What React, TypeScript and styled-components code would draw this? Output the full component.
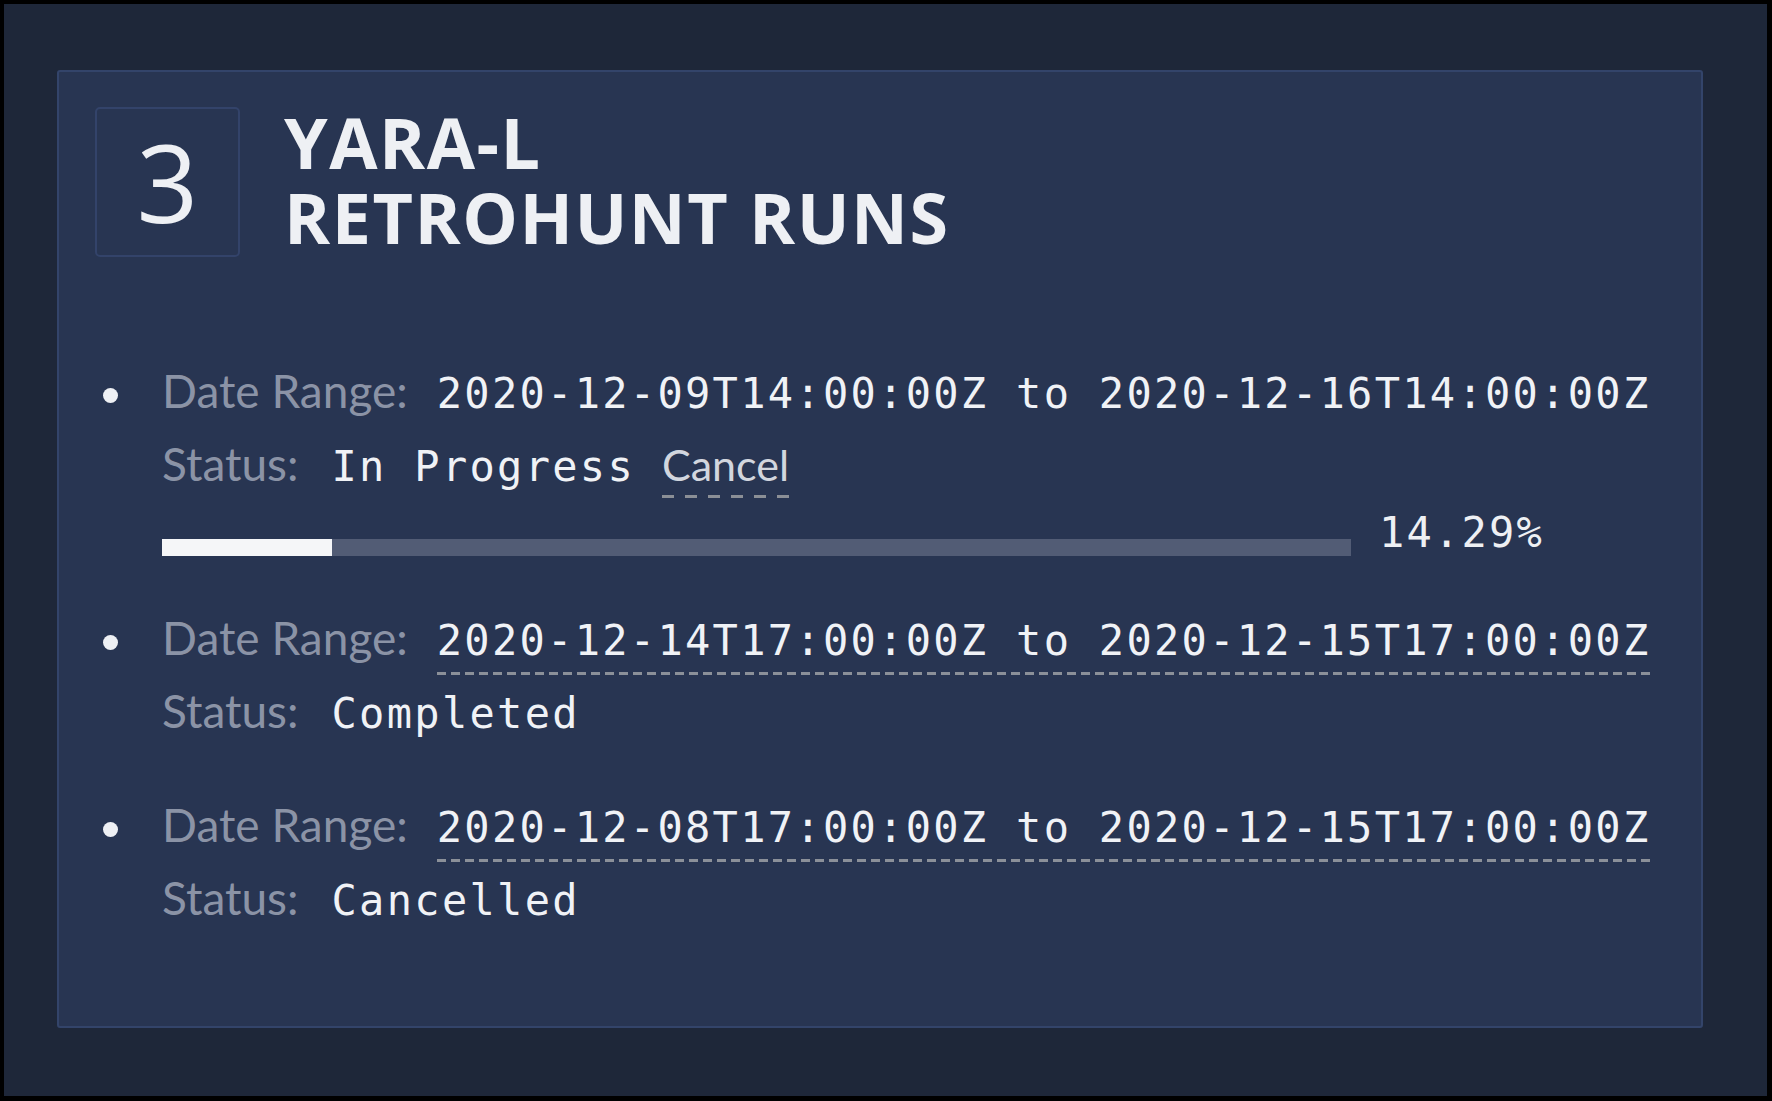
import React from "react";
import styled, { createGlobalStyle } from "styled-components";

const GlobalStyle = createGlobalStyle`
  html, body {
    margin: 0;
    padding: 0;
    background: #000;
  }
  * { box-sizing: border-box; }
`;

const Page = styled.div`
  margin: 4px 5px 5px 4px;
  height: 1092px;
  background: #1e2739;
  padding: 66px 64px 68px 53px;
  display: flex;
  flex-direction: column;
`;

const Card = styled.section`
  flex: 1;
  background: #283552;
  border: 2px solid #33446a;
  border-radius: 3px;
  padding: 35px 36px;
`;

const Header = styled.header`
  display: flex;
  align-items: flex-start;
  gap: 44px;
`;

const NumberBox = styled.div`
  width: 145px;
  height: 150px;
  border: 2px solid #33436a;
  border-radius: 5px;
  display: flex;
  align-items: center;
  justify-content: center;
  font-family: "Open Sans", sans-serif;
  font-weight: 400;
  font-size: 108px;
  line-height: 1;
  color: #eef0f4;
`;

const Title = styled.h1`
  margin: -2px 0 0;
  font-family: "Open Sans", sans-serif;
  font-weight: 700;
  font-size: 70px;
  line-height: 75px;
  letter-spacing: 1.5px;
  text-transform: uppercase;
  color: #eef0f4;
`;

const RunList = styled.ul`
  list-style: none;
  margin: 97px 0 0;
  padding: 0;
  display: flex;
  flex-direction: column;
  gap: 41px;
`;

const RunItem = styled.li`
  display: grid;
  grid-template-columns: 67px 1fr;
`;

const Bullet = styled.span`
  width: 15px;
  height: 15px;
  border-radius: 50%;
  background: #eef0f4;
  margin: 34px 0 0 8px;
`;

const RunBody = styled.div`
  display: flex;
  flex-direction: column;
`;

const FieldLine = styled.div`
  display: flex;
  align-items: baseline;
  height: 73px;
  line-height: 73px;
  white-space: nowrap;
`;

const Label = styled.span<{ $gap?: number }>`
  font-family: Lato, "Open Sans", sans-serif;
  font-size: 46px;
  color: #8b93a6;
  margin-right: ${(p) => p.$gap ?? 29}px;
`;

const Value = styled.span<{ $dashed?: boolean }>`
  font-family: "DejaVu Sans Mono", "Liberation Mono", monospace;
  font-size: 42px;
  letter-spacing: 2.3px;
  color: #f0f2f6;
  white-space: pre;
  ${(p) =>
    p.$dashed
      ? `
    background-image: linear-gradient(to right, #8b9099 0 9px, transparent 9px 14px);
    background-size: 14px 3px;
    background-repeat: repeat-x;
    background-position: 0 calc(100% - 2px);
  `
      : ""}
`;

const CancelLink = styled.span`
  font-family: Lato, "Open Sans", sans-serif;
  font-size: 43px;
  color: #d2d6de;
  margin-left: 27px;
  cursor: pointer;
  background-image: linear-gradient(to right, #8b8f96 0 12px, transparent 12px 23px);
  background-size: 23px 3px;
  background-repeat: repeat-x;
  background-position: 0 calc(100% - 3px);
`;

const ProgressRow = styled.div`
  display: flex;
  align-items: flex-start;
  margin: 12px 0 4px;
`;

const Track = styled.div`
  width: 1189px;
  height: 17px;
  margin-top: 27px;
  background: #525c75;
`;

const Fill = styled.div`
  height: 100%;
  background: #f5f6f8;
`;

const Percent = styled.span`
  font-family: "DejaVu Sans Mono", "Liberation Mono", monospace;
  font-size: 42px;
  line-height: 1;
  letter-spacing: 2.2px;
  color: #eef0f4;
  margin-left: 28px;
`;

type Run = {
  range: string;
  status: string;
  dashed: boolean;
  progress?: number;
};

const runs: Run[] = [
  {
    range: "2020-12-09T14:00:00Z to 2020-12-16T14:00:00Z",
    status: "In Progress",
    dashed: false,
    progress: 14.29,
  },
  {
    range: "2020-12-14T17:00:00Z to 2020-12-15T17:00:00Z",
    status: "Completed",
    dashed: true,
  },
  {
    range: "2020-12-08T17:00:00Z to 2020-12-15T17:00:00Z",
    status: "Cancelled",
    dashed: true,
  },
];

export default function App() {
  return (
    <>
      <GlobalStyle />
      <Page>
        <Card>
          <Header>
            <NumberBox>3</NumberBox>
            <Title>
              YARA-L
              <br />
              Retrohunt Runs
            </Title>
          </Header>
          <RunList>
            {runs.map((run) => (
              <RunItem key={run.range}>
                <Bullet />
                <RunBody>
                  <FieldLine>
                    <Label>Date Range:</Label>
                    <Value $dashed={run.dashed}>{run.range}</Value>
                  </FieldLine>
                  <FieldLine>
                    <Label $gap={33}>Status:</Label>
                    <Value>{run.status}</Value>
                    {run.progress !== undefined && <CancelLink>Cancel</CancelLink>}
                  </FieldLine>
                  {run.progress !== undefined && (
                    <ProgressRow>
                      <Track>
                        <Fill style={{ width: `${run.progress}%` }} />
                      </Track>
                      <Percent>{run.progress.toFixed(2)}%</Percent>
                    </ProgressRow>
                  )}
                </RunBody>
              </RunItem>
            ))}
          </RunList>
        </Card>
      </Page>
    </>
  );
}
